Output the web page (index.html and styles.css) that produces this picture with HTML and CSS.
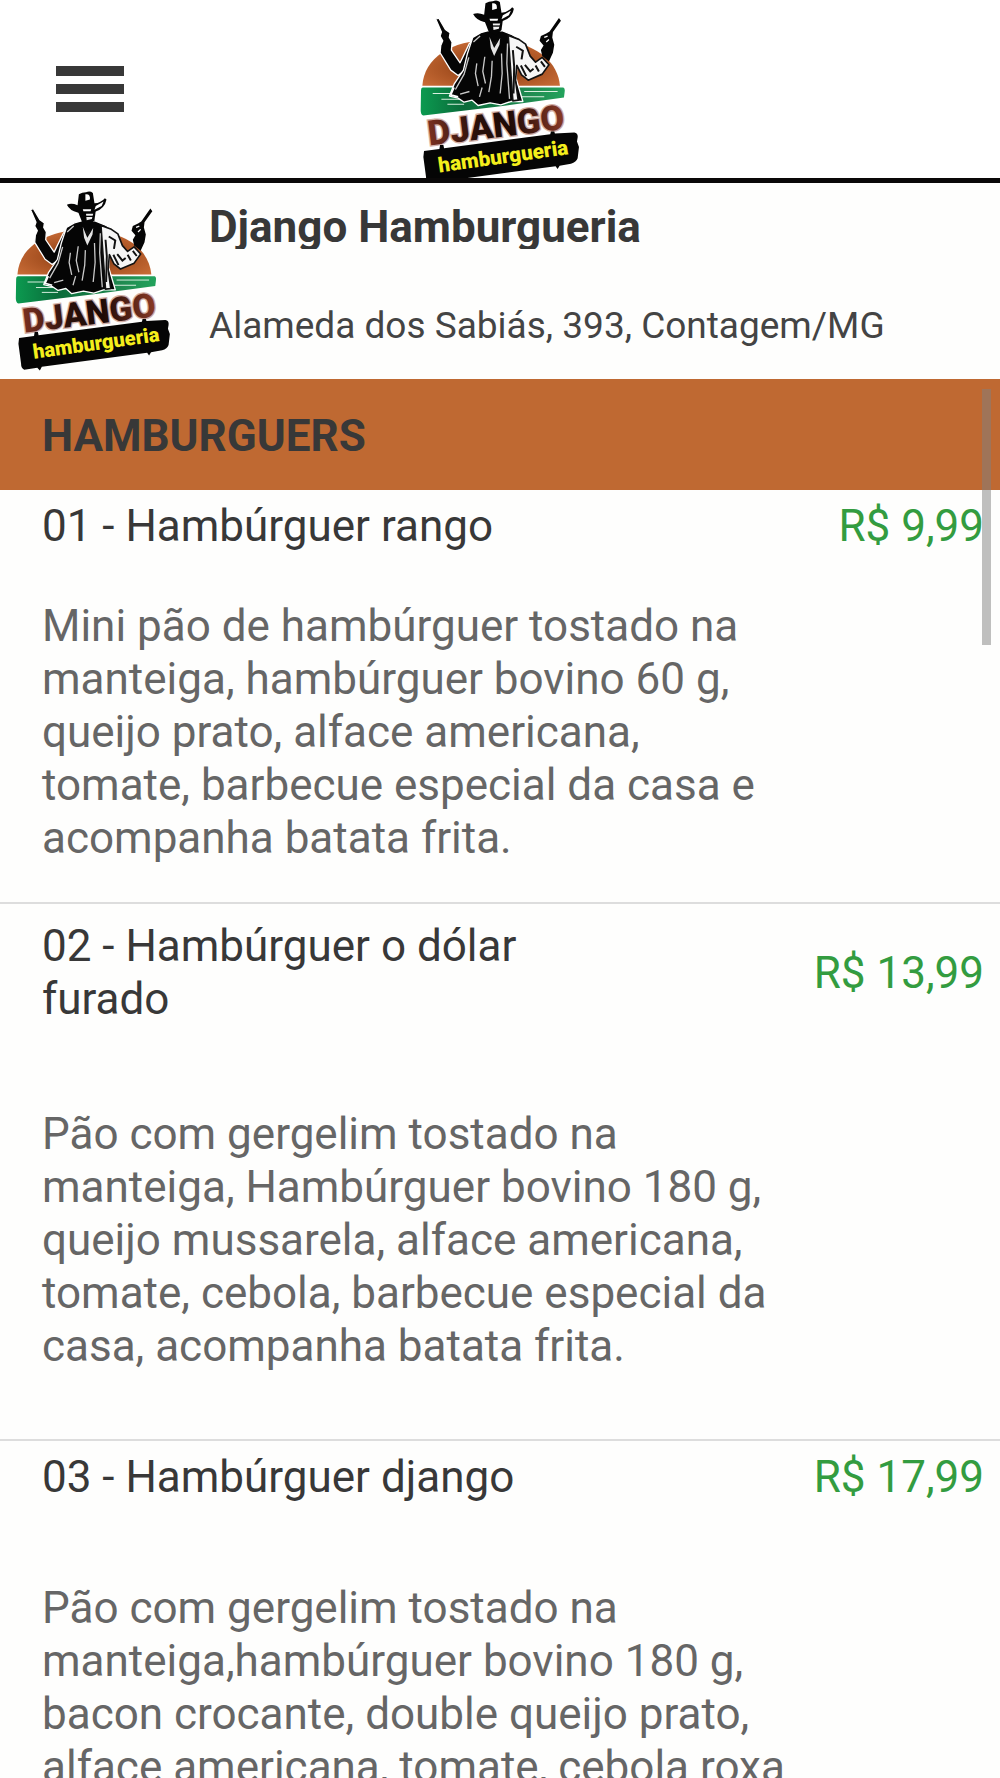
FILE: index.html
```html
<!DOCTYPE html>
<html lang="pt-BR">
<head>
<meta charset="utf-8">
<meta name="viewport" content="width=device-width, initial-scale=1">
<title>Django Hamburgueria</title>
<link rel="stylesheet" href="styles.css">
</head>
<body>
<svg class="sprite" aria-hidden="true">
  <defs>
    <radialGradient id="sun" cx="50%" cy="60%" r="60%">
      <stop offset="0" stop-color="#5e2c10"/>
      <stop offset=".55" stop-color="#a85222"/>
      <stop offset="1" stop-color="#c66a35"/>
    </radialGradient>
    <linearGradient id="grass" x1="0" x2="1" y1="0" y2="0">
      <stop offset="0" stop-color="#0c9a50"/>
      <stop offset=".3" stop-color="#0a6b3a"/>
      <stop offset=".75" stop-color="#1f8a50"/>
      <stop offset="1" stop-color="#22a35c"/>
    </linearGradient>
    <linearGradient id="letters" x1="0" x2="1" y1="0" y2="0">
      <stop offset="0" stop-color="#7a3020"/>
      <stop offset=".35" stop-color="#2a100a"/>
      <stop offset=".6" stop-color="#1d0a06"/>
      <stop offset="1" stop-color="#8a3a26"/>
    </linearGradient>
    <symbol id="logo" viewBox="0 0 500 560">
      <g transform="translate(-49 0)">
        <!-- sun and field -->
        <path d="M65 257C70 175 150 120 270 120C390 120 470 175 477 257Z" fill="url(#sun)"/>
        <path d="M66 262H487Q493 264 491 276L489 292L300 318L68 346Q60 344 60 330L61 270Q61 262 66 262Z" fill="url(#grass)"/>
        <path d="M96 280H158M122 297H180M140 312H190M370 274H470M360 290H430" stroke="#d9f0e0" stroke-width="3" fill="none"/>
        <!-- left arm and pistol -->
        <path d="M105 57L114 54L134 88L148 98L146 112L154 126L152 150L178 188L206 130L222 116L230 180L172 226L150 210L118 158L120 136L126 122L118 108L122 96Z" fill="#050505" stroke="#fff" stroke-width="4" stroke-linejoin="round"/>
        <!-- coat -->
        <path d="M216 112L240 98L262 92H304L334 104L356 118L350 160L346 236L366 304L330 304L300 314L268 308L232 316L214 300L190 306L172 294L146 288L160 252L188 210L200 160Z" fill="#050505" stroke="#fff" stroke-width="4" stroke-linejoin="round"/>
        <!-- right sleeve and pistol -->
        <path d="M322 106L354 118L374 132L388 168L404 186L424 172L444 194L424 222L382 240L362 224L348 196L344 240L352 300L336 302L330 220Z" fill="#f6f6f6" stroke="#111" stroke-width="5" stroke-linejoin="round"/>
        <path d="M346 140L366 152L362 178M372 194L388 214L398 206M360 196L376 228M404 196L414 214M336 150L340 200L338 280M420 184L432 200" stroke="#111" stroke-width="6" fill="none"/>
        <path d="M474 54L480 62L456 96L454 112L460 134L456 158L444 184L424 168L420 150L428 136L416 122L420 108L436 100L446 94Z" fill="#050505"/>
        <path d="M430 112L440 108M436 126L444 118" stroke="#fff" stroke-width="4"/>
        <!-- head and hat -->
        <path d="M250 60H306L302 90L286 106L264 96Z" fill="#050505"/>
        <path d="M276 70H298L294 86L278 90Z" fill="#f2f2f2"/>
        <path d="M274 78H298" stroke="#050505" stroke-width="4"/>
        <path d="M217 42Q232 36 250 44L254 10Q264 4 276 4Q288 -2 297 6L302 38Q322 36 334 22L339 26Q334 54 304 64Q280 72 250 66Q226 60 217 42Z" fill="#050505"/>
        <path d="M274 10Q290 8 288 26L274 30ZM306 46L330 32L324 46L302 58ZM266 56H292L290 62H268Z" fill="#fff"/>
        <!-- shirt and folds -->
        <path d="M266 110L280 144L298 114L296 134L280 168L270 144Z" fill="#e4e4e4"/>
        <path d="M276 124L282 132L290 122" stroke="#111" stroke-width="5" fill="none"/>
        <path d="M228 190L224 220L232 258M252 170L246 214L254 250M274 182L272 228L264 276M302 160L304 220L298 280M320 130L318 190L326 296M204 172L190 222L164 268M218 126L238 108M178 282L206 274M236 290L244 262" stroke="#c9c9c9" stroke-width="4" fill="none"/>
        <path d="M160 262L150 284L172 290" stroke="#fff" stroke-width="5" fill="none"/>
        <!-- signs -->
        <g transform="rotate(-7 290 411)">
          <text class="logo-name" x="290" y="411" text-anchor="middle">DJANGO</text>
        </g>
        <path d="M70 452L116 446L118 434L128 434L130 444L448 402L450 394L460 394L462 400L520 397Q532 399 530 412L528 424L534 440L530 474Q526 486 510 490L476 496L470 506L464 498L140 541L134 552L126 544L86 550Q76 546 76 530L68 470Z" fill="#050505"/>
        <g transform="rotate(-8 310 490)">
          <text class="logo-tag" x="310" y="489" text-anchor="middle">hamburgueria</text>
        </g>
      </g>
    </symbol>
  </defs>
</svg>

<header class="topbar">
  <button class="menu-button" type="button" aria-label="Menu">
    <span class="menu-bar"></span>
    <span class="menu-bar"></span>
    <span class="menu-bar"></span>
  </button>
  <svg class="topbar-logo" role="img" aria-label="Django Hamburgueria"><use href="#logo"/></svg>
</header>

<section class="store">
  <svg class="store-logo" role="img" aria-label="Django Hamburgueria"><use href="#logo"/></svg>
  <div class="store-info">
    <h1 class="store-name">Django Hamburgueria</h1>
    <p class="store-address">Alameda dos Sabiás, 393, Contagem/MG</p>
  </div>
</section>

<main class="menu">
  <div class="scroll-thumb"></div>
  <h2 class="category">HAMBURGUERS</h2>
  <ul class="items">
    <li class="item">
      <div class="item-head">
        <h3 class="item-title">01 - Hambúrguer rango</h3>
        <span class="item-price">R$ 9,99</span>
      </div>
      <p class="item-text">Mini pão de hambúrguer tostado na manteiga, hambúrguer bovino 60 g, queijo prato, alface americana, tomate, barbecue especial da casa e acompanha batata frita.</p>
    </li>
    <li class="item item-tall">
      <div class="item-head">
        <h3 class="item-title">02 - Hambúrguer o dólar furado</h3>
        <span class="item-price">R$ 13,99</span>
      </div>
      <p class="item-text">Pão com gergelim tostado na manteiga, Hambúrguer bovino 180 g, queijo mussarela, alface americana, tomate, cebola, barbecue especial da casa, acompanha batata frita.</p>
    </li>
    <li class="item item-spaced">
      <div class="item-head">
        <h3 class="item-title">03 - Hambúrguer django</h3>
        <span class="item-price">R$ 17,99</span>
      </div>
      <p class="item-text">Pão com gergelim tostado na manteiga,hambúrguer bovino 180 g, bacon crocante, double queijo prato, alface americana, tomate, cebola roxa</p>
    </li>
  </ul>
</main>
</body>
</html>
```
FILE: styles.css
```css
* {
  box-sizing: border-box;
}

body {
  margin: 0;
  height: 100vh;
  display: flex;
  flex-direction: column;
  overflow: hidden;
  background: #fefefd;
  color: #383838;
  font-family: Roboto, "Liberation Sans", sans-serif;
}

h1, h2, h3, p, ul {
  margin: 0;
  padding: 0;
  font-weight: 400;
}

.sprite {
  position: absolute;
  width: 0;
  height: 0;
}

.logo-name {
  font: 900 104px Roboto, sans-serif;
  fill: url(#letters);
  stroke: #d3b0a6;
  stroke-width: 8px;
  paint-order: stroke;
}

.logo-tag {
  font: 900 62px Roboto, sans-serif;
  fill: #f4ee1c;
}

.topbar {
  flex: none;
  display: grid;
  grid-template-columns: 1fr auto 1fr;
  grid-template-rows: 100%;
  align-items: center;
  height: 183px;
  padding: 0 56px;
  border-bottom: 5px solid #0a0808;
  background: #fff;
  overflow: hidden;
}

.menu-button {
  display: flex;
  flex-direction: column;
  gap: 8px;
  width: 68px;
  padding: 0;
  border: 0;
  background: none;
}

.menu-bar {
  height: 10px;
  background: #383838;
}

.topbar-logo {
  align-self: start;
  width: 167px;
  height: 187px;
}

.store {
  flex: none;
  display: flex;
  gap: 34px;
  height: 196px;
  padding: 8px 12px;
}

.store-logo {
  flex: none;
  width: 163px;
  height: 182px;
}

.store-name {
  height: 58px;
  padding-top: 10px;
  overflow: hidden;
  font-size: 44px;
  font-weight: 700;
  line-height: 53px;
}

.store-address {
  padding-top: 50px;
  font-size: 37px;
  line-height: 53px;
  color: #444;
}

.menu {
  position: relative;
  flex: 1;
  min-height: 0;
  overflow: hidden;
}

.scroll-thumb {
  position: absolute;
  top: 10px;
  right: 9px;
  width: 9px;
  height: 256px;
  background: rgba(128, 128, 128, 0.5);
}

.category {
  padding: 31px 42px 27px;
  background: #bf6932;
  font-size: 44px;
  font-weight: 700;
  line-height: 53px;
}

.items {
  list-style: none;
}

.item {
  padding: 10px 16px 37px 42px;
  border-bottom: 2px solid #ddd;
}

.item-head {
  display: flex;
  align-items: center;
  justify-content: space-between;
  margin-bottom: 47px;
  font-size: 44px;
  line-height: 53px;
}

.item-title {
  max-width: 56%;
  font-size: 44px;
}

.item-price {
  color: #339c40;
}

.item-text {
  max-width: 80%;
  font-size: 44px;
  line-height: 53px;
  color: #666;
}

.item-tall {
  padding-top: 16px;
  padding-bottom: 66px;
}

.item-tall .item-head {
  margin-bottom: 82px;
}

.item-spaced .item-head {
  margin-bottom: 78px;
}
```
